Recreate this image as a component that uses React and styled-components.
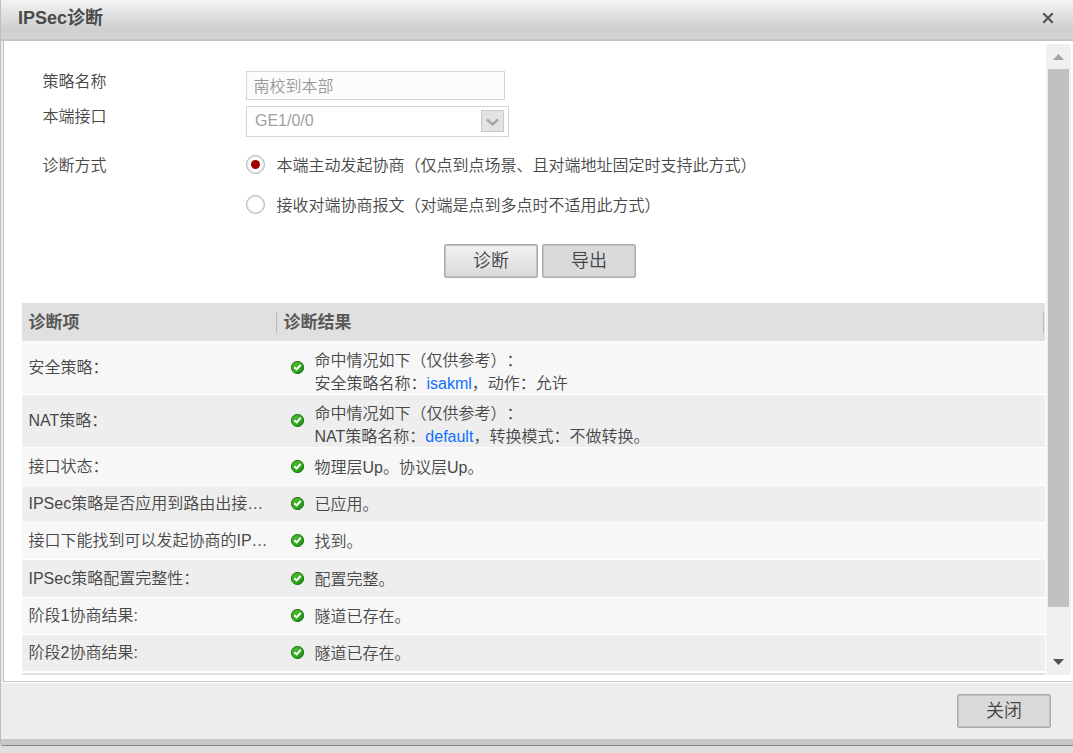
import React, { useState } from 'react';
import styled, { createGlobalStyle } from 'styled-components';

const GlobalStyle = createGlobalStyle`
  * {
    box-sizing: border-box;
  }

  body {
    margin: 0;
    overflow: hidden;
    background: #e0e0e0;
    color: #484848;
    font-family: "Liberation Sans", "Noto Sans CJK SC", sans-serif;
    font-size: 16px;
    font-weight: 350;
    text-spacing-trim: space-all;
  }
`;

const Dialog = styled.div`
  display: flex;
  flex-direction: column;
  width: 1073px;
  height: 746px;
  background: #ededed;
  border-left: 1px solid #bdbdbd;
  border-bottom: 1px solid #868686;
  border-bottom-left-radius: 3px;
`;

const Header = styled.div`
  display: flex;
  align-items: flex-start;
  justify-content: space-between;
  height: 41px;
  padding: 6px 19px 0 17px;
  background: linear-gradient(#f4f4f4 0, #d0d0d0 28px, #d3d3d3 38px);
  border-bottom: 2px solid #c3c3c3;
`;

const Title = styled.h1`
  margin: 0;
  font-size: 18px;
  line-height: 25px;
  font-weight: 700;
  color: #4a4a4a;
`;

const CloseIcon = styled.svg`
  width: 12px;
  height: 12px;
  margin-top: 6px;
`;

const Body = styled.div`
  display: flex;
  justify-content: space-between;
  height: 641px;
  margin-left: 2px;
  padding: 3px 2px 0 18px;
  background: #fff;
  border-left: 1px solid #bdbdbd;
  border-bottom: 1px solid #c6c6c6;
`;

const Content = styled.div`
  width: 1023px;
`;

const Form = styled.div`
  height: 259px;
  padding: 27px 0 0 20px;
`;

const FormRow = styled.div`
  display: flex;
  align-items: flex-start;
  height: ${props => props.$height}px;
`;

const FormLabel = styled.div`
  width: 204px;
  padding-left: 0.5px;
  line-height: 22px;
`;

const TextInput = styled.div`
  width: 259px;
  height: 29px;
  padding-left: 6.5px;
  line-height: 30px;
  color: #999;
  background: #fcfcfc;
  border: 1px solid #d5d5d5;
`;

const Select = styled.div`
  display: flex;
  justify-content: space-between;
  width: 263px;
  height: 31px;
  padding: 3px 4px 0 8px;
  line-height: 22px;
  color: #a0a0a0;
  background: #fff;
  border: 1px solid #d5d5d5;
`;

const SelectArrow = styled.span`
  display: flex;
  align-items: center;
  justify-content: center;
  width: 23px;
  height: 22px;
  padding-top: 2px;
  background: #e3e3e3;
  border: 1px solid #c6cacf;
`;

const RadioRow = styled.label`
  display: flex;
  align-items: flex-start;
  height: 20px;
  margin-bottom: 20px;
  line-height: 22px;
  white-space: nowrap;
`;

const Radio = styled.span`
  display: flex;
  align-items: center;
  justify-content: center;
  width: 19px;
  height: 19px;
  margin-right: 11.5px;
  background: #fff;
  border: 1px solid #b4b4b4;
  border-radius: 50%;
  box-shadow: inset 0 0 1px 1px #e4e4e4;

  &::after {
    content: '';
    width: 9px;
    height: 9px;
    border-radius: 50%;
    background: ${props => (props.$checked ? '#a00000' : 'transparent')};
  }
`;

const Actions = styled.div`
  display: flex;
  gap: 4px;
  padding: 8px 0 0 402px;
`;

const Button = styled.button`
  width: 94px;
  height: 34px;
  padding: 0;
  font-family: inherit;
  font-size: 18px;
  font-weight: inherit;
  line-height: 28px;
  color: #444;
  background: ${props => (props.$light ? 'linear-gradient(#f3f3f3, #d9d9d9)' : '#dadada')};
  border: 1px solid #a9abae;
  border-radius: 2px;
  box-shadow: inset 0 0 0 1px #c0c1c4;
`;

const Table = styled.div`
  height: 372px;
  border-bottom: 2px solid #e1e1e1;
`;

const TableHead = styled.div`
  display: flex;
  align-items: center;
  height: 39px;
  background: #e0e0e0;
  border-bottom: 1px solid #fff;
  font-size: 17px;
  font-weight: 700;
  color: #585858;
`;

const HeadCell = styled.div`
  width: ${props => props.$width}px;
  height: 21px;
  padding-left: 6.5px;
  line-height: 22px;
  border-right: 1px solid #b9b9b9;
`;

const Row = styled.div`
  display: flex;
  align-items: center;
  height: ${props => props.$height}px;
  background: ${props => (props.$odd ? '#eee' : '#f7f7f7')};
  border-bottom: 1px solid #fff;
`;

const ItemCell = styled.div`
  width: 269px;
  padding-left: 6.5px;
  line-height: 22px;
  white-space: nowrap;
`;

const ResultCell = styled.div`
  flex: 1;
  padding: ${props => props.$top}px 0 0 10.5px;
  line-height: 23px;
  white-space: nowrap;
`;

const Link = styled.span`
  color: #1070ff;
`;

const Scrollbar = styled.div`
  display: flex;
  flex-direction: column;
  align-items: center;
  width: 25px;
  height: 631px;
  padding-top: 10px;
  background: #f0f0f0;
`;

const ScrollThumb = styled.div`
  width: 21px;
  height: 538px;
  margin: 9px 0 52px;
  background: #c1c1c1;
`;

const ScrollArrow = styled.svg`
  flex: none;
  width: 11px;
  height: 6px;
`;

const Footer = styled.div`
  display: flex;
  justify-content: flex-end;
  flex: 1;
  padding: 11px 22px 0 0;
  border-top: 1px solid #fff;
  border-bottom: 6px solid #c8c8c8;
`;

const StatusIcon = styled.svg`
  flex: none;
  width: 13px;
  height: 13px;
  margin-bottom: 1px;
`;

const SuccessIcon = () => (
  <StatusIcon viewBox="0 0 13 13">
    <defs>
      <linearGradient id="ball" x1="0" y1="0" x2="1" y2="1">
        <stop offset="0" stopColor="#4fae35" />
        <stop offset="0.5" stopColor="#3cb526" />
        <stop offset="1" stopColor="#078500" />
      </linearGradient>
    </defs>
    <circle cx="6.5" cy="6.5" r="6.1" fill="url(#ball)" stroke="#14700f" />
    <path d="M3.4 6.2l2.3 2.2 4-4.6" fill="none" stroke="#fff" strokeWidth="2" />
  </StatusIcon>
);

const rows = [
  {
    item: '安全策略：',
    height: 53,
    top: 7,
    result: <>命中情况如下（仅供参考）：<br />安全策略名称：<Link>isakml</Link>，动作：允许</>,
  },
  {
    item: 'NAT策略：',
    height: 53,
    top: 7,
    result: <>命中情况如下（仅供参考）：<br />NAT策略名称：<Link>default</Link>，转换模式：不做转换。</>,
  },
  { item: '接口状态：', height: 38, result: '物理层Up。协议层Up。' },
  { item: 'IPSec策略是否应用到路由出接…', height: 37, result: '已应用。' },
  { item: '接口下能找到可以发起协商的IP…', height: 37, result: '找到。' },
  { item: 'IPSec策略配置完整性：', height: 38, result: '配置完整。' },
  { item: '阶段1协商结果:', height: 37, result: '隧道已存在。' },
  { item: '阶段2协商结果:', height: 37, result: '隧道已存在。' },
];

const modes = [
  '本端主动发起协商（仅点到点场景、且对端地址固定时支持此方式）',
  '接收对端协商报文（对端是点到多点时不适用此方式）',
];

const App = () => {
  const [mode, setMode] = useState(0);

  return (
    <>
      <GlobalStyle />
      <Dialog>
        <Header>
          <Title>IPSec诊断</Title>
          <CloseIcon viewBox="0 0 12 12">
            <path d="M1.3 1.3l9.4 9.4M10.7 1.3l-9.4 9.4" stroke="#555" strokeWidth="2.3" />
          </CloseIcon>
        </Header>

        <Body>
          <Content>
            <Form>
              <FormRow $height={35}>
                <FormLabel>策略名称</FormLabel>
                <TextInput>南校到本部</TextInput>
              </FormRow>
              <FormRow $height={49}>
                <FormLabel>本端接口</FormLabel>
                <Select>
                  GE1/0/0
                  <SelectArrow>
                    <svg width="13" height="9" viewBox="0 0 13 9">
                      <path d="M1 1.5l5.5 5 5.5-5" fill="none" stroke="#a6a6a6" strokeWidth="2.4" />
                    </svg>
                  </SelectArrow>
                </Select>
              </FormRow>
              <FormRow $height={81}>
                <FormLabel>诊断方式</FormLabel>
                <div>
                  {modes.map((text, i) => (
                    <RadioRow key={text} onClick={() => setMode(i)}>
                      <Radio $checked={mode === i} />
                      {text}
                    </RadioRow>
                  ))}
                </div>
              </FormRow>
              <Actions>
                <Button $light>诊断</Button>
                <Button>导出</Button>
              </Actions>
            </Form>

            <Table>
              <TableHead>
                <HeadCell $width={255}>诊断项</HeadCell>
                <HeadCell $width={767}>诊断结果</HeadCell>
              </TableHead>
              {rows.map((row, i) => (
                <Row key={row.item} $height={row.height} $odd={i % 2 === 1}>
                  <ItemCell>{row.item}</ItemCell>
                  <SuccessIcon />
                  <ResultCell $top={row.top || 1}>{row.result}</ResultCell>
                </Row>
              ))}
            </Table>
          </Content>

          <Scrollbar>
            <ScrollArrow viewBox="0 0 11 6">
              <path d="M0 6L5.5 0 11 6z" fill="#a3a3a3" />
            </ScrollArrow>
            <ScrollThumb />
            <ScrollArrow viewBox="0 0 11 6">
              <path d="M0 0h11L5.5 6z" fill="#505050" />
            </ScrollArrow>
          </Scrollbar>
        </Body>

        <Footer>
          <Button>关闭</Button>
        </Footer>
      </Dialog>
    </>
  );
};

export default App;
